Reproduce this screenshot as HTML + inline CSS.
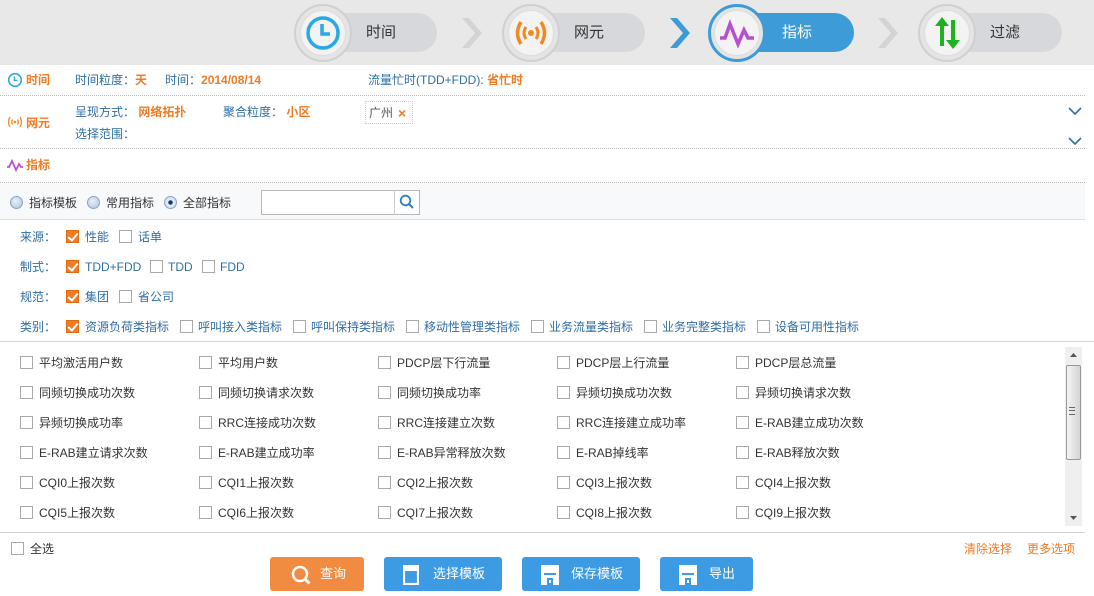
<!DOCTYPE html>
<html><head><meta charset="utf-8">
<style>
*{margin:0;padding:0;box-sizing:border-box}
body{width:1094px;height:596px;background:#fff;font-family:"Liberation Sans","Noto Sans CJK SC","WenQuanYi Zen Hei",sans-serif;font-size:12px;color:#333;position:relative;overflow:hidden}
.a{position:absolute;white-space:nowrap}
.hdr{position:absolute;left:0;top:0;width:1094px;height:65px;background:#e8e8e8}
.pill{position:absolute;top:13px;height:39px;border-radius:20px;background:#d6d8db;font-size:15px;color:#333;line-height:39px}
.pill.on{background:#3d9bd8;color:#fff}
.circ{position:absolute;top:4px;width:58px;height:58px;border-radius:50%;background:#e4e4e4;border:2px solid #d0d0d0}
.circ.on{border:3px solid #3d9bd8}
.circ .in{position:absolute;left:4px;top:4px;width:46px;height:46px;border-radius:50%;background:#f3f3f3;border:1px solid #ddd}
.circ.on .in{left:3px;top:3px}
.lb{color:#2f6ea5}
.or{color:#f07b23}
.dot{position:absolute;left:0;width:1085px;border-top:1px dotted #bbb}
.cb{position:absolute;width:13px;height:13px;border:1px solid #a9a9a9;background:#fff}
.cb.c{background:#f07b23;border-color:#e06a10}
.cb.c:after{content:"";position:absolute;left:3px;top:0px;width:4px;height:8px;border:solid #fff;border-width:0 2px 2px 0;transform:rotate(40deg)}
.t{position:absolute;white-space:nowrap;line-height:14px}
.f .t{color:#2f6ea5}
.rd{position:absolute;width:13px;height:13px;border-radius:50%;border:1px solid #8aa3c0;background:radial-gradient(circle at 40% 35%,#e8f0fa,#a9c3e0)}
.btn{position:absolute;top:557px;height:34px;border-radius:3px;color:#fff;font-size:13px;line-height:34px}
</style></head><body>
<div class="hdr"></div>
<!-- steps -->
<div class="pill" style="left:320px;width:117px"><span style="position:absolute;left:46px">时间</span></div>
<div class="circ" style="left:294px"><div class="in"><svg width="46" height="46" viewBox="0 0 46 46" style="position:absolute;left:-1px;top:-1px"><circle cx="23" cy="23" r="15" fill="none" stroke="#29a8e6" stroke-width="3.5"/><path d="M22 14v10h8" fill="none" stroke="#29a8e6" stroke-width="3.5"/></svg></div></div>
<svg class="a" style="left:460px;top:16px" width="22" height="34"><path d="M2 2l13 15L2 32h7l13-15L9 2z" fill="#d4d4d4"/></svg>
<div class="pill" style="left:528px;width:117px"><span style="position:absolute;left:46px">网元</span></div>
<div class="circ" style="left:502px"><div class="in"><svg width="46" height="46" viewBox="0 0 46 46" style="position:absolute;left:-1px;top:-1px"><path d="M13 12q-7 11 0 22M33 12q7 11 0 22" fill="none" stroke="#f08a24" stroke-width="3.5"/><path d="M18 17q-4 6 0 12M28 17q4 6 0 12" fill="none" stroke="#f08a24" stroke-width="3"/><circle cx="23" cy="23" r="3" fill="#f08a24"/></svg></div></div>
<svg class="a" style="left:668px;top:16px" width="22" height="34"><path d="M2 2l13 15L2 32h7l13-15L9 2z" fill="#3d9bd8"/></svg>
<div class="pill on" style="left:736px;width:118px"><span style="position:absolute;left:46px">指标</span></div>
<div class="circ on" style="left:708px"><div class="in"><svg width="46" height="46" viewBox="0 0 46 46" style="position:absolute;left:-1px;top:-1px"><path d="M6 28h5l5-14 8 20 6-14 4 8h6" fill="none" stroke="#b84fd0" stroke-width="3.5" stroke-linejoin="miter"/></svg></div></div>
<svg class="a" style="left:876px;top:16px" width="22" height="34"><path d="M2 2l13 15L2 32h7l13-15L9 2z" fill="#d4d4d4"/></svg>
<div class="pill" style="left:944px;width:118px"><span style="position:absolute;left:46px">过滤</span></div>
<div class="circ" style="left:918px"><div class="in"><svg width="46" height="46" viewBox="0 0 46 46" style="position:absolute;left:-1px;top:-1px"><path d="M16 36V16h-5l7-9 7 9h-5v20z" fill="#1db320"/><path d="M27 10h4v20h5l-7 9-7-9h5z" fill="#1db320"/></svg></div></div>

<!-- time row -->
<svg class="a" style="left:7px;top:72px" width="16" height="16"><circle cx="8" cy="8" r="6.3" fill="none" stroke="#29a8e6" stroke-width="1.6"/><path d="M7.5 4.5v4h3" fill="none" stroke="#29a8e6" stroke-width="1.5"/></svg>
<div class="t or" style="left:26px;top:73px;font-weight:bold">时间</div>
<div class="t" style="left:75px;top:73px"><span class="lb">时间粒度：</span><span class="or" style="font-weight:bold">天</span></div>
<div class="t" style="left:165px;top:73px"><span class="lb">时间：</span><span class="or" style="font-weight:bold">2014/08/14</span></div>
<div class="t" style="left:368px;top:73px"><span class="lb">流量忙时(TDD+FDD): </span><span class="or" style="font-weight:bold">省忙时</span></div>
<div class="dot" style="top:95px"></div>
<!-- net row -->
<svg class="a" style="left:6px;top:115px" width="18" height="14"><path d="M4 2q-3 5 0 10M14 2q3 5 0 10M6.5 4.5q-1.5 2.5 0 5M11.5 4.5q1.5 2.5 0 5" fill="none" stroke="#f08a24" stroke-width="1.3"/><circle cx="9" cy="7" r="1.3" fill="#f08a24"/></svg>
<div class="t or" style="left:26px;top:116px;font-weight:bold">网元</div>
<div class="t" style="left:75px;top:105px"><span class="lb">呈现方式： </span><span class="or" style="font-weight:bold">网络拓扑</span></div>
<div class="t" style="left:223px;top:105px"><span class="lb">聚合粒度： </span><span class="or" style="font-weight:bold">小区</span></div>
<div class="t lb" style="left:75px;top:127px">选择范围：</div>
<div class="a" style="left:365px;top:101px;width:48px;height:23px;border:1px dotted #ccc"></div>
<div class="t" style="left:369px;top:106px;color:#555">广州</div>
<div class="t or" style="left:398px;top:106px;font-weight:bold;font-size:14px">×</div>
<svg class="a" style="left:1068px;top:106px" width="14" height="10"><path d="M1 2l6 6 6-6" fill="none" stroke="#2f6ea5" stroke-width="1.6"/></svg>
<svg class="a" style="left:1068px;top:136px" width="14" height="10"><path d="M1 2l6 6 6-6" fill="none" stroke="#2f6ea5" stroke-width="1.6"/></svg>
<div class="dot" style="top:148px"></div>
<!-- indicator row -->
<svg class="a" style="left:6px;top:158px" width="18" height="14"><path d="M1 9h2l3-6 4 9 3-6 2 3h2" fill="none" stroke="#b84fd0" stroke-width="1.8"/></svg>
<div class="t or" style="left:26px;top:158px;font-weight:bold">指标</div>
<div class="dot" style="top:182px"></div>
<div class="a" style="left:0;top:183px;width:1085px;height:37px;background:#f8f9fb;border-bottom:1px solid #dcdcdc"></div>
<div class="rd" style="left:10px;top:196px"></div><div class="t" style="left:29px;top:196px">指标模板</div>
<div class="rd" style="left:87px;top:196px"></div><div class="t" style="left:106px;top:196px">常用指标</div>
<div class="rd" style="left:164px;top:196px;background:radial-gradient(circle,#1a3a6a 0 2px,#e8f0fa 2.5px,#c0d4ea)"></div><div class="t" style="left:183px;top:196px">全部指标</div>
<div class="a" style="left:261px;top:190px;width:159px;height:25px;border:1px solid #b8b8b8;background:#fff"></div>
<div class="a" style="left:394px;top:190px;width:1px;height:25px;background:#ccc"></div>
<svg class="a" style="left:399px;top:194px" width="16" height="16"><circle cx="6.5" cy="6.5" r="4.8" fill="none" stroke="#2f7fc0" stroke-width="1.8"/><path d="M10 10l4 4" stroke="#2f7fc0" stroke-width="2"/></svg>
<!-- filters -->
<div class="f">
<div class="t" style="left:20px;top:230px">来源：</div>
<div class="cb c" style="left:66px;top:230px"></div><div class="t" style="left:85px;top:230px">性能</div>
<div class="cb" style="left:119px;top:230px"></div><div class="t" style="left:138px;top:230px">话单</div>
<div class="t" style="left:20px;top:260px">制式：</div>
<div class="cb c" style="left:66px;top:260px"></div><div class="t" style="left:85px;top:260px">TDD+FDD</div>
<div class="cb" style="left:150px;top:260px"></div><div class="t" style="left:168px;top:260px">TDD</div>
<div class="cb" style="left:202px;top:260px"></div><div class="t" style="left:220px;top:260px">FDD</div>
<div class="t" style="left:20px;top:290px">规范：</div>
<div class="cb c" style="left:66px;top:290px"></div><div class="t" style="left:85px;top:290px">集团</div>
<div class="cb" style="left:119px;top:290px"></div><div class="t" style="left:138px;top:290px">省公司</div>
<div class="t" style="left:20px;top:320px">类别：</div>
<div class="cb c" style="left:66px;top:320px"></div><div class="t" style="left:85px;top:320px">资源负荷类指标</div>
<div class="cb" style="left:180px;top:320px"></div><div class="t" style="left:198px;top:320px">呼叫接入类指标</div>
<div class="cb" style="left:293px;top:320px"></div><div class="t" style="left:311px;top:320px">呼叫保持类指标</div>
<div class="cb" style="left:406px;top:320px"></div><div class="t" style="left:424px;top:320px">移动性管理类指标</div>
<div class="cb" style="left:531px;top:320px"></div><div class="t" style="left:549px;top:320px">业务流量类指标</div>
<div class="cb" style="left:644px;top:320px"></div><div class="t" style="left:662px;top:320px">业务完整类指标</div>
<div class="cb" style="left:757px;top:320px"></div><div class="t" style="left:775px;top:320px">设备可用性指标</div>
</div>
<div class="a" style="left:0;top:341px;width:1094px;height:1px;background:#d4d4d4"></div>
<!-- grid -->
<div id="g"></div>
<div class="cb" style="left:20px;top:356px"></div><div class="t" style="left:39px;top:356px">平均激活用户数</div>
<div class="cb" style="left:199px;top:356px"></div><div class="t" style="left:218px;top:356px">平均用户数</div>
<div class="cb" style="left:378px;top:356px"></div><div class="t" style="left:397px;top:356px">PDCP层下行流量</div>
<div class="cb" style="left:557px;top:356px"></div><div class="t" style="left:576px;top:356px">PDCP层上行流量</div>
<div class="cb" style="left:736px;top:356px"></div><div class="t" style="left:755px;top:356px">PDCP层总流量</div>
<div class="cb" style="left:20px;top:386px"></div><div class="t" style="left:39px;top:386px">同频切换成功次数</div>
<div class="cb" style="left:199px;top:386px"></div><div class="t" style="left:218px;top:386px">同频切换请求次数</div>
<div class="cb" style="left:378px;top:386px"></div><div class="t" style="left:397px;top:386px">同频切换成功率</div>
<div class="cb" style="left:557px;top:386px"></div><div class="t" style="left:576px;top:386px">异频切换成功次数</div>
<div class="cb" style="left:736px;top:386px"></div><div class="t" style="left:755px;top:386px">异频切换请求次数</div>
<div class="cb" style="left:20px;top:416px"></div><div class="t" style="left:39px;top:416px">异频切换成功率</div>
<div class="cb" style="left:199px;top:416px"></div><div class="t" style="left:218px;top:416px">RRC连接成功次数</div>
<div class="cb" style="left:378px;top:416px"></div><div class="t" style="left:397px;top:416px">RRC连接建立次数</div>
<div class="cb" style="left:557px;top:416px"></div><div class="t" style="left:576px;top:416px">RRC连接建立成功率</div>
<div class="cb" style="left:736px;top:416px"></div><div class="t" style="left:755px;top:416px">E-RAB建立成功次数</div>
<div class="cb" style="left:20px;top:446px"></div><div class="t" style="left:39px;top:446px">E-RAB建立请求次数</div>
<div class="cb" style="left:199px;top:446px"></div><div class="t" style="left:218px;top:446px">E-RAB建立成功率</div>
<div class="cb" style="left:378px;top:446px"></div><div class="t" style="left:397px;top:446px">E-RAB异常释放次数</div>
<div class="cb" style="left:557px;top:446px"></div><div class="t" style="left:576px;top:446px">E-RAB掉线率</div>
<div class="cb" style="left:736px;top:446px"></div><div class="t" style="left:755px;top:446px">E-RAB释放次数</div>
<div class="cb" style="left:20px;top:476px"></div><div class="t" style="left:39px;top:476px">CQI0上报次数</div>
<div class="cb" style="left:199px;top:476px"></div><div class="t" style="left:218px;top:476px">CQI1上报次数</div>
<div class="cb" style="left:378px;top:476px"></div><div class="t" style="left:397px;top:476px">CQI2上报次数</div>
<div class="cb" style="left:557px;top:476px"></div><div class="t" style="left:576px;top:476px">CQI3上报次数</div>
<div class="cb" style="left:736px;top:476px"></div><div class="t" style="left:755px;top:476px">CQI4上报次数</div>
<div class="cb" style="left:20px;top:506px"></div><div class="t" style="left:39px;top:506px">CQI5上报次数</div>
<div class="cb" style="left:199px;top:506px"></div><div class="t" style="left:218px;top:506px">CQI6上报次数</div>
<div class="cb" style="left:378px;top:506px"></div><div class="t" style="left:397px;top:506px">CQI7上报次数</div>
<div class="cb" style="left:557px;top:506px"></div><div class="t" style="left:576px;top:506px">CQI8上报次数</div>
<div class="cb" style="left:736px;top:506px"></div><div class="t" style="left:755px;top:506px">CQI9上报次数</div>
<!-- scrollbar -->
<div class="a" style="left:1065px;top:347px;width:17px;height:179px;background:#efefef"></div>
<svg class="a" style="left:1069px;top:351px" width="9" height="8"><path d="M1 6l3.5-4 3.5 4z" fill="#555"/></svg>
<div class="a" style="left:1066px;top:365px;width:15px;height:95px;background:linear-gradient(90deg,#f4f4f4,#d4d4d4);border:1px solid #999;border-radius:2px"></div>
<div class="a" style="left:1069px;top:407px;width:6px;height:8px;border-top:1px solid #666;border-bottom:1px solid #666"><div style="margin-top:2px;border-top:1px solid #666"></div></div>
<svg class="a" style="left:1069px;top:514px" width="9" height="8"><path d="M1 2l3.5 4 3.5-4z" fill="#555"/></svg>
<div class="a" style="left:0;top:532px;width:1085px;height:1px;background:#d4d4d4"></div>
<!-- footer -->
<div class="cb" style="left:11px;top:542px"></div><div class="t" style="left:30px;top:542px">全选</div>
<div class="t or" style="left:964px;top:542px;font-weight:normal">清除选择</div>
<div class="t or" style="left:1027px;top:542px">更多选项</div>
<div class="btn" style="left:270px;width:94px;background:#f28b42"><svg class="a" style="left:20px;top:7px" width="22" height="22"><circle cx="10" cy="10" r="7" fill="none" stroke="#fff" stroke-width="2.5"/><path d="M14.5 14.5l5 5" stroke="#fff" stroke-width="2.8"/></svg><span style="position:absolute;left:50px">查询</span></div>
<div class="btn" style="left:384px;width:118px;background:#3d9be3"><svg class="a" style="left:19px;top:8px" width="16" height="20"><rect x="1" y="1" width="14" height="18" fill="none" stroke="#fff" stroke-width="2.2"/><rect x="1" y="1" width="14" height="5" fill="#fff"/></svg><span style="position:absolute;left:49px">选择模板</span></div>
<div class="btn" style="left:522px;width:118px;background:#3d9be3"><svg class="a" style="left:19px;top:8px" width="18" height="20"><path d="M0 0h18v20H0z" fill="#fff"/><rect x="3" y="8" width="12" height="2" fill="#3d9be3"/><rect x="6" y="13" width="6" height="7" fill="#3d9be3"/><rect x="8" y="15" width="2" height="3" fill="#fff"/></svg><span style="position:absolute;left:49px">保存模板</span></div>
<div class="btn" style="left:660px;width:93px;background:#3d9be3"><svg class="a" style="left:19px;top:8px" width="18" height="20"><path d="M0 0h18v20H0z" fill="#fff"/><rect x="3" y="8" width="12" height="2" fill="#3d9be3"/><rect x="6" y="13" width="6" height="7" fill="#3d9be3"/><rect x="8" y="15" width="2" height="3" fill="#fff"/></svg><span style="position:absolute;left:49px">导出</span></div>
</body></html>
